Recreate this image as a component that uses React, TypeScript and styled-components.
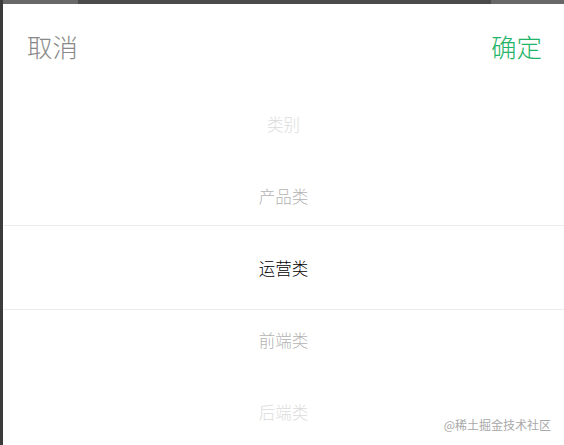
import React from "react";
import styled, { createGlobalStyle } from "styled-components";

const Global = createGlobalStyle`
  html, body { margin: 0; padding: 0; background: #ffffff; }
  body { font-family: "Noto Sans CJK SC", "Noto Sans", sans-serif; overflow: hidden; }
`;

const Frame = styled.div`
  display: flex;
  width: 564px;
  height: 445px;
  overflow: hidden;
`;

const LeftStrip = styled.div`
  width: 3px;
  flex: none;
  background: #3b3b3b;
`;

const Main = styled.div`
  flex: 1;
  display: flex;
  flex-direction: column;
  position: relative;
  background: #ffffff;
`;

const TopBar = styled.div`
  display: flex;
  height: 4px;
  flex: none;
`;

const TopSeg = styled.div<{ $w?: number; $tone: string }>`
  ${(p) => (p.$w ? `width: ${p.$w}px; flex: none;` : "flex: 1;")}
  background: ${(p) => p.$tone};
`;

const Header = styled.div`
  height: 84px;
  display: flex;
  align-items: center;
  justify-content: space-between;
  padding: 0 22px 0 24px;
  flex: none;
`;

const Action = styled.span<{ $color: string }>`
  font-size: 25.5px;
  line-height: 1;
  font-weight: 300;
  color: ${(p) => p.$color};
`;

const Picker = styled.div`
  display: flex;
  flex-direction: column;
  position: relative;
  flex: 1;
`;

const Item = styled.div<{ $color: string }>`
  height: 72px;
  display: flex;
  align-items: center;
  justify-content: center;
  font-size: 16.5px;
  font-weight: 300;
  color: ${(p) => p.$color};
  flex: none;
`;

const Indicator = styled.div`
  position: absolute;
  left: 1px;
  right: 0;
  top: 137px;
  height: 83px;
  border-top: 1px solid #ebebeb;
  border-bottom: 1px solid #ebebeb;
  pointer-events: none;
`;

const Watermark = styled.div`
  position: absolute;
  right: 13px;
  bottom: 14px;
  font-size: 12px;
  line-height: 1;
  color: #a8a8a8;
`;

const items: { label: string; color: string }[] = [
  { label: "类别", color: "#dcdcdc" },
  { label: "产品类", color: "#b3b3b3" },
  { label: "运营类", color: "#000000" },
  { label: "前端类", color: "#b3b3b3" },
  { label: "后端类", color: "#dcdcdc" },
];

export default function App() {
  return (
    <>
      <Global />
      <Frame>
        <LeftStrip />
        <Main>
          <TopBar>
            <TopSeg $w={75} $tone="#686868" />
            <TopSeg $tone="#4a4a4a" />
            <TopSeg $w={73} $tone="#686868" />
          </TopBar>
          <Header>
            <Action $color="#888888">取消</Action>
            <Action $color="#1fb468">确定</Action>
          </Header>
          <Picker>
            <Indicator />
            {items.map((it) => (
              <Item key={it.label} $color={it.color}>
                {it.label}
              </Item>
            ))}
          </Picker>
          <Watermark>@稀土掘金技术社区</Watermark>
        </Main>
      </Frame>
    </>
  );
}
